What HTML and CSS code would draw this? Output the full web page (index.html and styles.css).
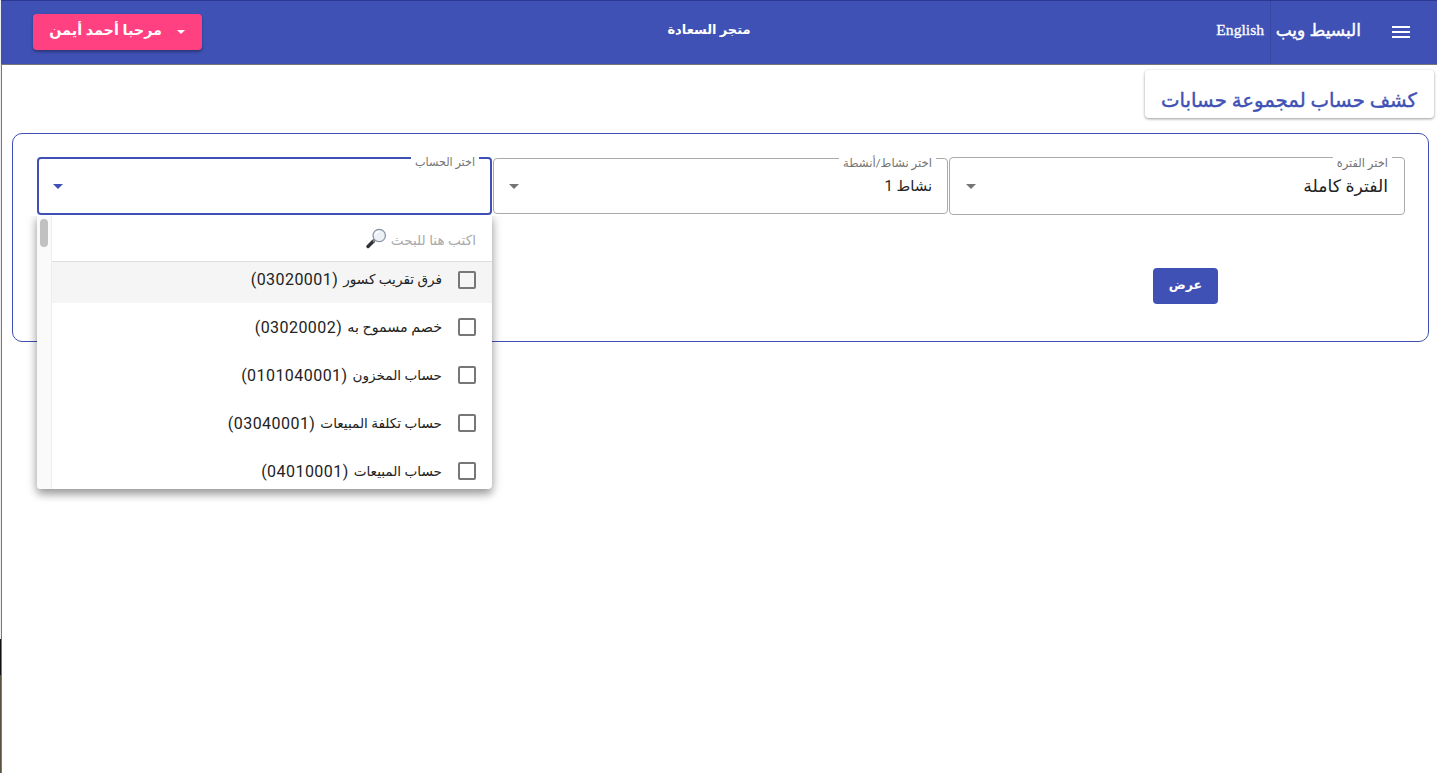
FILE: index.html
```html
<!DOCTYPE html>
<html lang="ar" dir="rtl">
<head>
<meta charset="utf-8">
<title>كشف حساب لمجموعة حسابات</title>
<link rel="stylesheet" href="styles.css">
</head>
<body>
<div class="edge"><i class="edge-dark"></i><i class="edge-photo"></i></div>
<div class="page">
  <header class="topbar">
    <div class="start">
      <svg class="menu-icon" viewBox="0 0 24 24"><path d="M3 18h18v-2H3v2zm0-5h18v-2H3v2zm0-7v2h18V6H3z"/></svg>
      <span class="brand">البسيط ويب</span>
      <span class="lang">English</span>
    </div>
    <div class="store">متجر السعادة</div>
    <div class="end">
      <button class="user"><svg class="caret" viewBox="0 0 10 5"><path d="M0 0h10L5 5z"/></svg><span>مرحبا أحمد أيمن</span></button>
    </div>
  </header>
  <main>
    <h1 class="heading">كشف حساب لمجموعة حسابات</h1>
    <section class="card">
      <div class="fields">
        <div class="field period">
          <span class="label">اختر الفترة</span>
          <span class="value">الفترة كاملة</span>
          <svg class="caret" viewBox="0 0 10 5"><path d="M0 0h10L5 5z"/></svg>
        </div>
        <div class="field activity">
          <span class="label">اختر نشاط/أنشطة</span>
          <span class="value">نشاط 1</span>
          <svg class="caret" viewBox="0 0 10 5"><path d="M0 0h10L5 5z"/></svg>
        </div>
        <div class="field account">
          <span class="label">اختر الحساب</span>
          <span class="value"></span>
          <svg class="caret" viewBox="0 0 10 5"><path d="M0 0h10L5 5z"/></svg>
          <div class="menu">
            <div class="list">
              <div class="search"><span>اكتب هنا للبحث</span>
                <svg class="glass" viewBox="0 0 21 21"><path d="M7.5 13 2 18.5" stroke="#303238" stroke-width="3.4" stroke-linecap="round"/><path d="M9 11.7 7 13.7" stroke="#888" stroke-width="2"/><circle cx="13.2" cy="7.5" r="6.2" fill="#edf1f5" stroke="#8590a0" stroke-width="1.2"/><path d="M9.5 7a4 4 0 0 1 4-3.5" fill="none" stroke="#fff" stroke-width="1.4"/></svg>
              </div>
              <div class="option hover"><i class="box"></i><span class="name">فرق تقريب كسور</span><bdi>(03020001)</bdi></div>
              <div class="option"><i class="box"></i><span class="name wide">خصم مسموح به</span><bdi>(03020002)</bdi></div>
              <div class="option"><i class="box"></i><span class="name">حساب المخزون</span><bdi>(0101040001)</bdi></div>
              <div class="option"><i class="box"></i><span class="name">حساب تكلفة المبيعات</span><bdi>(03040001)</bdi></div>
              <div class="option"><i class="box"></i><span class="name">حساب المبيعات</span><bdi>(04010001)</bdi></div>
            </div>
            <div class="scroll"><i class="thumb"></i></div>
          </div>
        </div>
      </div>
      <button class="show">عرض</button>
    </section>
  </main>
</div>
</body>
</html>
```
FILE: styles.css
```css
* { box-sizing: border-box; }
body { margin: 0; height: 773px; display: flex; direction: ltr; overflow: hidden; background: #fff; font-family: Roboto, "DejaVu Sans", sans-serif; font-size: 16px; color: #222; white-space: nowrap; }
button { font: inherit; border: 0; padding: 0; color: #fff; }
.edge { width: 1px; flex: none; background: #eee; display: flex; flex-direction: column; padding-top: 639px; }
.edge-dark { height: 36px; background: #111; }
.edge-photo { flex: 1; background: #5c5443; }
.page { flex: 1; min-width: 0; border-left: 1px solid #777; direction: rtl; }
.topbar { height: 65px; margin-left: -1px; background: #4051b5; border-top: 1px solid #2a3892; border-bottom: 1px solid #777; color: #fff; display: grid; grid-template-columns: 1fr auto 1fr; line-height: 20px; }
.start { display: flex; height: 63px; }
.menu-icon { width: 24px; height: 24px; margin: 19px 24px 0 0; fill: #fff; }
.brand { width: 119px; padding: 19px 28px 0 0; font-size: 17px; -webkit-text-stroke: .4px; border-left: 1px solid #3747a3; }
.lang { padding: 19px 6px 0 0; font-family: "Liberation Serif", serif; font-size: 15.6px; -webkit-text-stroke: .3px; }
.store { padding: 19px 20px 0 0; font-size: 13px; font-weight: bold; }
.end { padding: 13px 0 0 32px; display: flex; justify-content: flex-end; }
.user { width: 169px; height: 36px; border-radius: 4px; background: #ff4181; display: flex; align-items: center; padding: 0 17px 3px 0; gap: 15px; box-shadow: 0 2px 3px #0005; font-size: 14.4px; font-weight: bold; }
.caret { width: 10px; height: 5px; fill: #757575; }
.user .caret { width: 8px; height: 4px; margin-top: 3px; fill: #fff; }
main { padding: 5px 0 0 10px; }
.heading { width: 289px; height: 48px; margin: 0 3px 0 0; padding: 16px 17px 0 0; font-size: 19.7px; line-height: 30px; font-weight: 400; -webkit-text-stroke: .4px; color: #4051b5; border-radius: 4px; box-shadow: 0 1px 3px #0006; }
.card { height: 209px; margin: 15px 8px 0 0; padding: 23px 23px 0; border: 1px solid #4051b5; border-radius: 10px; }
.fields { display: flex; gap: 1px; height: 58px; }
.field { position: relative; flex: none; width: 456px; height: 58px; border: 1px solid #aaa; border-radius: 4px; display: flex; justify-content: space-between; padding: 16px 16px 0; line-height: 24px; }
.field > .caret { margin-top: 10px; }
.label { position: absolute; top: -5px; right: 12px; padding: 0 4px; background: #fff; font-size: 11.5px; line-height: 20px; color: #757575; }
.period .value { font-size: 17.3px; }
.activity { width: 455px; height: 56px; margin-top: 1px; padding: 15px 15px 0; }
.activity .label { font-size: 11.7px; right: 11px; top: -6px; }
.activity .value { font-size: 14.8px; }
.account { width: 455px; border: 2px solid #4051b5; padding: 15px 14px 0; }
.account > .caret { margin-top: 10px; fill: #4051b5; }
.account .label { right: 11px; top: -6px; font-size: 11.2px; }
.menu { position: absolute; z-index: 2; left: -2px; top: 55px; width: 455px; height: 275px; background: #fff; border-radius: 0 0 4px 4px; box-shadow: 0 5px 8px #0005, 0 3px 14px #0002; display: flex; overflow: hidden; clip-path: inset(2px -20px -20px -20px); }
.list { flex: 1; }
.search { height: 48px; display: flex; background: #fff; color: #aaa; border-bottom: 1px solid #ddd; padding: 14px 16px; font-size: 13.7px; gap: 4px; }
.glass { width: 21px; height: 21px; fill: none; }
.option { height: 48px; display: flex; gap: 5px; padding-right: 16px; line-height: 49px; }
.option.hover { height: 41px; background: #f5f5f5; line-height: 35px; }
.box { width: 18px; height: 18px; border: 2px solid #777; border-radius: 2px; margin: 15px 0 0 11px; }
.hover .box { margin-top: 9px; }
.name { font-size: 13.6px; }
.name.wide { font-size: 14.3px; }
.option bdi { letter-spacing: .45px; }
.scroll { width: 15px; padding: 5px 0 0 4px; background: #fafafa; border-right: 1px solid #eee; }
.thumb { display: block; width: 8px; height: 28px; margin-right: 3px; border-radius: 4px; background: #c1c1c1; }
.show { display: block; margin: 53px 187px 0 0; padding-bottom: 4px; width: 65px; height: 36px; border-radius: 4px; background: #4051b5; font-size: 12.6px; font-weight: bold; }
```
